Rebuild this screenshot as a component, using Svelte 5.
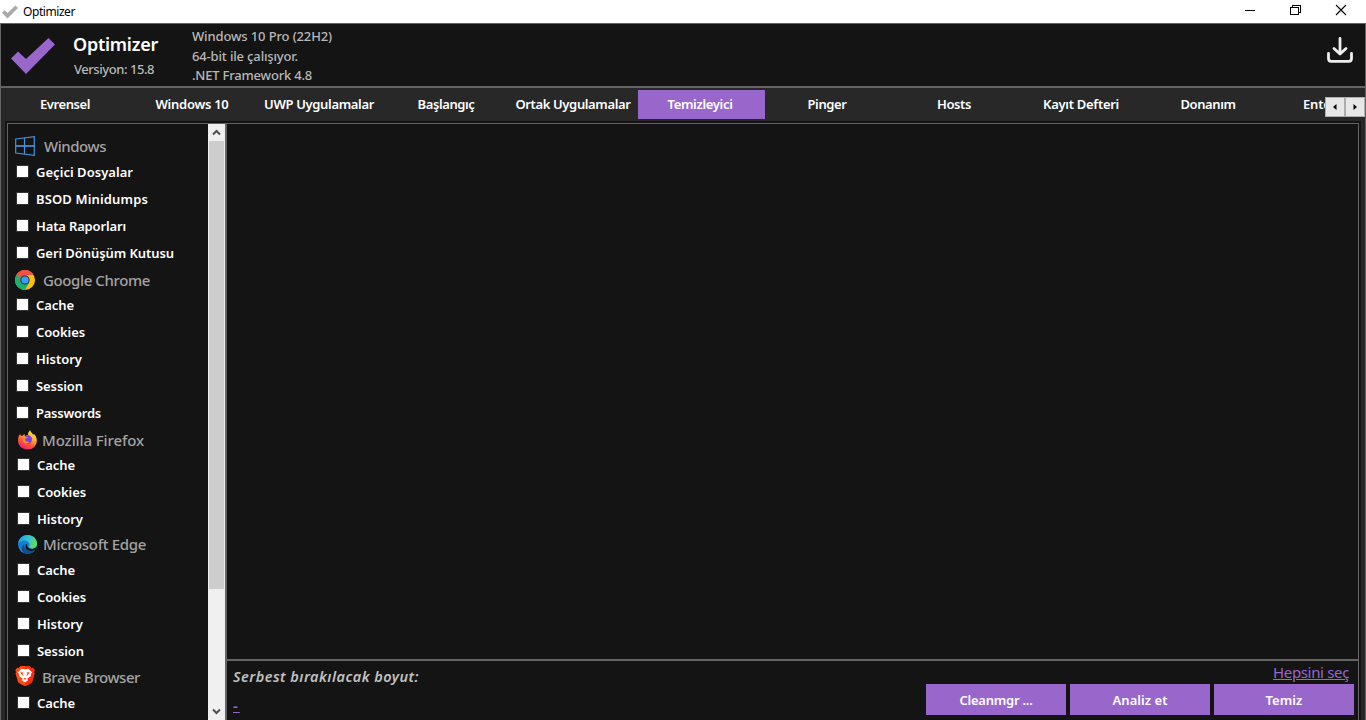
<script lang="ts">
  const tabs = [
    {name: 'Evrensel', width: 50},
    {name: 'Windows 10', width: 73},
    {name: 'UWP Uygulamalar', width: 110},
    {name: 'Başlangıç', width: 57},
    {name: 'Ortak Uygulamalar', width: 115},
    {name: 'Temizleyici', width: 65},
    {name: 'Pinger', width: 39},
    {name: 'Hosts', width: 34},
    {name: 'Kayıt Defteri', width: 76},
    {name: 'Donanım', width: 55},
    {name: 'Enterprise', width: 64},
  ];
  let selected = $state('Temizleyici');

  const cache = {name: 'Cache', width: 38};
  const cookies = {name: 'Cookies', width: 49};
  const history = {name: 'History', width: 46};
  const session = {name: 'Session', width: 47};

  const groups = [
    {
      id: 'windows', title: 'Windows', width: 62,
      items: [
        {name: 'Geçici Dosyalar', width: 97},
        {name: 'BSOD Minidumps', width: 112},
        {name: 'Hata Raporları', width: 90},
        {name: 'Geri Dönüşüm Kutusu', width: 138},
      ]
    },
    {
      id: 'chrome', title: 'Google Chrome', width: 107,
      items: [cache, cookies, history, session, {name: 'Passwords', width: 65}]
    },
    {id: 'firefox', title: 'Mozilla Firefox', width: 102, items: [cache, cookies, history]},
    {id: 'edge', title: 'Microsoft Edge', width: 103, items: [cache, cookies, history, session]},
    {id: 'brave', title: 'Brave Browser', width: 98, items: [cache]},
  ];

  const actions = [
    {name: 'Cleanmgr ...', width: 73},
    {name: 'Analiz et', width: 55},
    {name: 'Temiz', width: 37},
  ];

  // spreads the letters so that a label takes exactly the given width
  function fit(node: HTMLElement, width: number) {
    const natural = node.getBoundingClientRect().width;
    const gap = (width - natural) / node.textContent.length;
    node.style.letterSpacing = `${gap.toFixed(3)}px`;
  }
</script>

<div class="window">
  <div class="titlebar">
    <svg class="titlebar__icon" width="16" height="14" viewBox="0 0 44 36">
      <path d="M0 20 L7 13 L15 21 L37 0 L44 7 L15 36 Z" fill="#a9a9a9"/>
    </svg>
    <span class="titlebar__name"><span use:fit={52}>Optimizer</span></span>
    <svg class="titlebar__controls" width="106" height="22" viewBox="0 0 106 22" fill="none" stroke="#000" shape-rendering="crispEdges">
      <path d="M0 10.5H10"/>
      <path d="M45.5 7.5H53.5V14.5H45.5Z M47.5 7V5.5H55.5V12.5H54"/>
      <path d="M91 5L101 15M101 5L91 15" shape-rendering="auto" stroke-width="1.1"/>
    </svg>
  </div>

  <header class="header">
    <svg class="header__logo" width="44" height="36" viewBox="0 0 44 36">
      <path d="M0 20.5 L7 13.5 L15 21 L37.5 0 L44 6.5 L15 36 Z" fill="#9966cc"/>
    </svg>
    <div class="header__app">
      <h1><span use:fit={85}>Optimizer</span></h1>
      <p><span use:fit={80}>Versiyon: 15.8</span></p>
    </div>
    <div class="header__system">
      <p><span use:fit={140}>Windows 10 Pro (22H2)</span></p>
      <p><span use:fit={106}>64-bit ile çalışıyor.</span></p>
      <p><span use:fit={120}>.NET Framework 4.8</span></p>
    </div>
    <svg class="header__download" width="28" height="28" viewBox="0 0 28 28" fill="none" stroke="#eee" stroke-width="2.8" stroke-linecap="round" stroke-linejoin="round">
      <path d="M14 2.5V17M8 12.5L14 18L20 12.5"/>
      <path d="M2.5 17.5V22.5Q2.5 25.3 5.3 25.3H22.7Q25.5 25.3 25.5 22.5V17.5"/>
    </svg>
  </header>

  <nav class="tabs">
    {#each tabs as tab}
      <button class="tabs__tab" class:active={tab.name === selected} onclick={() => selected = tab.name}>
        <span use:fit={tab.width}>{tab.name}</span>
      </button>
    {/each}
    <div class="tabs__scroll">
      <span><svg width="4" height="6" viewBox="0 0 4 6"><path d="M3.5 0V6L0 3Z"/></svg></span>
      <span><svg width="4" height="6" viewBox="0 0 4 6"><path d="M.5 0V6L4 3Z"/></svg></span>
    </div>
  </nav>

  <div class="page">
    <main class="cleaner">
      <aside class="options">
        <div class="options__list">
          {#each groups as group}
            <section class="group {group.id}">
              <h2>
                {#if group.id === 'windows'}
                  <svg width="20" height="20" viewBox="0 0 20 20" fill="none" stroke="#4a90d9" stroke-width="1.2">
                    <path d="M.7 3L19.3 .7V19.3L.7 17Z"/>
                    <path d="M9.5 2V18" />
                    <path d="M.7 10H19.3" stroke-width="1.7"/>
                  </svg>
                {:else if group.id === 'chrome'}
                  <svg width="20" height="20" viewBox="0 0 20 20">
                    <circle cx="10" cy="10" r="10" fill="#ffc107"/>
                    <path d="M10 10L1.34 5A10 10 0 0 0 10 20L14.33 12.5Z" fill="#1eb070"/>
                    <path d="M1.34 5A10 10 0 0 1 18.66 5H10L5.67 12.5Z" fill="#f15246"/>
                    <path d="M1.34 5L5.67 12.5L10 10Z" fill="#1eb070"/>
                    <circle cx="10" cy="10" r="4.7" fill="#343a46"/>
                    <circle cx="10" cy="10" r="3.6" fill="#3c9cff"/>
                  </svg>
                {:else if group.id === 'firefox'}
                  <svg width="19" height="20" viewBox="0 0 19 20">
                    <defs>
                      <linearGradient id="fox" x1=".8" y1="0" x2=".25" y2="1">
                        <stop offset="0" stop-color="#fff04c"/>
                        <stop offset=".35" stop-color="#ffb22e"/>
                        <stop offset=".65" stop-color="#ff5935"/>
                        <stop offset="1" stop-color="#f5127c"/>
                      </linearGradient>
                    </defs>
                    <path d="M2.2 4L3 6L5 5.5L6.2 3.7L7 6L10 5C9.7 3 11 1.2 12.3 .3C12.5 2.3 14 3 15.3 4.7L16 4C18 6 19 8.5 18.8 11C18.4 16 14.5 19.5 9.6 19.5C4.3 19.5 0 15.5 0 10.2C0 7.8 .8 5.5 2.2 4Z" fill="url(#fox)"/>
                    <circle cx="9.7" cy="9.8" r="4.2" fill="#7542e5"/>
                    <path d="M3.3 6.5C5 5.5 7 6 8 7.3H10.2C10.2 8.3 7.7 8.4 7.2 9C6.7 10.2 7.5 11.3 9 11.4C10 11.6 11 11.6 11.2 12.2C10 14.2 6.5 14 5 11.5Z" fill="#ff8a2b"/>
                    <path d="M10 5C12.2 5.4 13.8 7 14.2 9L12.2 8.2C11.5 7.4 10.6 6.7 9 6.7Z" fill="#9a3fe0"/>
                  </svg>
                {:else if group.id === 'edge'}
                  <svg width="19" height="19" viewBox="0 0 19 19">
                    <defs>
                      <linearGradient id="wave" x1="0" y1=".2" x2="1" y2=".5">
                        <stop offset="0" stop-color="#229be0"/>
                        <stop offset=".5" stop-color="#32c2dc"/>
                        <stop offset="1" stop-color="#62df58"/>
                      </linearGradient>
                    </defs>
                    <circle cx="9.5" cy="9.5" r="9.5" fill="#1282d7"/>
                    <path d="M6.5 9C5.4 13 9 17.2 16.8 15.3C13 20.5 6.3 20 4 15.5C3 12.5 4 10.4 6.5 9Z" fill="#104e94"/>
                    <path d="M9.3 8.6C8 11.3 10.4 14.3 14.7 13.8L19 12L16.9 15.3C13 17 7.7 15.8 7.5 11.6C7.4 10.2 8.2 9 9.3 8.6Z" fill="#141414"/>
                    <path d="M.2 8.2C1 3.2 4.8 0 9.6 0C15.3 0 19 4.2 19 8.4C19 11.7 16.6 13.4 14 13.4C11.8 13.4 10.6 12.6 11 11.8C12.2 10.2 11.9 7.8 9.7 6.5C6.5 4.5 2 5.5 .2 8.2Z" fill="url(#wave)"/>
                  </svg>
                {:else}
                  <svg width="20" height="20" viewBox="0 0 20 20">
                    <path d="M5.5 0H14.5L16.3 2L18 1.8L19.7 4.2L19 6L19.5 7.4L17 16C16.6 17 10.8 20 10 20C9.2 20 3.4 17 3 16L.5 7.4L1 6L.3 4.2L2 1.8L3.7 2Z" fill="#ff4a12"/>
                    <path d="M10 0H14.5L16.3 2L18 1.8L19.7 4.2L19 6L19.5 7.4L17 16C16.6 17 10.8 20 10 20Z" fill="#fa2c0b"/>
                    <path d="M10 3.2L13.5 2.8L17 6.2L15.8 8.4L16 10L12.4 12.5L13 14.2L10 16.5L7 14.2L7.6 12.5L4 10L4.2 8.4L3 6.2L6.5 2.8Z" fill="#fff"/>
                    <path d="M5.2 6.3L8.3 6.5L7.6 7.8L8.6 10.6L6.6 8.6ZM14.8 6.3L11.7 6.5L12.4 7.8L11.4 10.6L13.4 8.6ZM8.3 12.8L10 12L11.7 12.8L10 13.7Z" fill="#fb3a0e"/>
                  </svg>
                {/if}
                <span use:fit={group.width}>{group.title}</span>
              </h2>
              {#each group.items as item}
                <label class="option">
                  <input type="checkbox"/>
                  <span use:fit={item.width}>{item.name}</span>
                </label>
              {/each}
            </section>
          {/each}
        </div>
        <div class="scrollbar">
          <svg width="17" height="17" viewBox="0 0 17 17"><path d="M5 10.5L8.5 7L12 10.5"/></svg>
          <div class="scrollbar__thumb"></div>
          <svg class="scrollbar__down" width="17" height="17" viewBox="0 0 17 17"><path d="M5 6.5L8.5 10L12 6.5"/></svg>
        </div>
      </aside>
      <div class="content">
        <div class="result"></div>
        <footer class="footer">
          <div class="footer__size">
            <p><span use:fit={186}>Serbest bırakılacak boyut:</span></p>
            <a href="#size">-</a>
          </div>
          <div class="footer__side">
            <a href="#all"><span use:fit={76}>Hepsini seç</span></a>
            <div class="footer__actions">
              {#each actions as action}
                <button><span use:fit={action.width}>{action.name}</span></button>
              {/each}
            </div>
          </div>
        </footer>
      </div>
    </main>
  </div>
</div>

<style>
  :global(body) {
    overflow: hidden;
    background: #141414;
  }

  * {
    box-sizing: border-box;
  }

  h1, h2, p {
    margin: 0;
    font-weight: 500;
  }

  h1 span, h2 span, p span {
    display: inline-block;
    white-space: nowrap;
  }

  button {
    border: none;
    padding: 0;
    color: #fff;
    font: 600 13px/20px "Noto Sans", "Open Sans", sans-serif;
    white-space: nowrap;
  }

  .window {
    display: flex;
    flex-direction: column;
    width: 1366px;
    height: 720px;
    overflow: hidden;
    font-family: "Noto Sans", "Open Sans", sans-serif;
    color: #fff;
    background: #141414;
  }

  .titlebar {
    flex: none;
    display: flex;
    align-items: center;
    height: 23px;
    padding: 0 15px 0 2px;
    background: #fff;
    color: #000;
    font-size: 12px;
  }

  .titlebar__name {
    margin-left: 5px;
    line-height: 23px;
  }

  .titlebar__controls {
    margin: -1px 0 0 auto;
  }

  .header {
    flex: none;
    display: flex;
    height: 65px;
    border: 1px solid #646464;
    border-bottom-width: 2px;
    padding-left: 10px;
    color: #b8b8b8;
    font-size: 13px;
  }

  .header__logo {
    margin-top: 14px;
  }

  .header__app {
    width: 119px;
    margin-left: 18px;
  }

  .header__app h1 {
    height: 35px;
    padding-top: 7px;
    color: #fff;
    font-size: 18px;
    font-weight: 600;
    line-height: 27px;
  }

  .header__app p {
    padding-left: 1px;
    line-height: 20px;
  }

  .header__system {
    padding-top: 3px;
    line-height: 19.5px;
  }

  .header__system p {
    height: 19.5px;
  }

  .header__download {
    margin: 12px 11px 0 auto;
  }

  .tabs {
    flex: none;
    position: relative;
    display: flex;
    height: 33px;
    padding: 2px 0 0 2px;
    overflow: hidden;
    border: solid #646464;
    border-width: 0 1px;
    background: #282828;
  }

  .tabs__tab {
    flex: none;
    width: 127px;
    height: 29px;
    padding: 0 3px 2px 0;
    background: transparent;
  }

  .tabs__tab.active {
    background: #9966cc;
  }

  .tabs__scroll {
    position: absolute;
    top: 9px;
    right: 0;
    display: flex;
    width: 40px;
    height: 20px;
    background: #f0f0f0;
  }

  .tabs__scroll span {
    flex: 1;
    display: flex;
    align-items: center;
    justify-content: center;
    border: 1px solid #adadad;
    background: #e7e7e7;
  }

  .page {
    flex: 1;
    display: flex;
    min-height: 0;
    padding: 0 4px;
    border: solid #646464;
    border-width: 0 1px;
    background: #282828;
  }

  .cleaner {
    flex: 1;
    display: flex;
    border: 2px solid #141414;
    border-bottom: none;
    background: #141414;
  }

  .options {
    flex: none;
    display: flex;
    width: 220px;
    border: solid #646464;
    border-width: 1px 2px 0 1px;
  }

  .options__list {
    flex: 1;
    padding-top: 9px;
    overflow: hidden;
  }

  .group h2 {
    display: flex;
    align-items: center;
    height: 25px;
    padding-left: 7px;
    color: #a3a3a3;
    font-size: 15px;
    line-height: 25px;
  }

  .group h2 svg {
    flex: none;
    margin: 2px 8px 0 0;
  }

  .group h2 span {
    padding-top: 3px;
  }

  .group.windows h2 svg {
    margin: 0 9px 0 0;
  }

  .group.windows h2 span,
  .group.brave h2 span {
    padding-top: 2px;
  }

  .group.firefox h2,
  .group.edge h2 {
    padding-left: 10px;
  }

  .group.firefox h2 svg {
    margin-right: 5px;
  }

  .group.edge h2 {
    height: 24px;
  }

  .group.edge h2 span {
    padding-top: 0;
  }

  .group.edge h2 svg {
    margin: 0 6px 0 0;
  }

  .group.brave h2 svg {
    margin: -2px 7px 0 0;
  }

  .option {
    display: flex;
    align-items: center;
    height: 27px;
    padding-left: 8px;
    font-size: 13px;
    font-weight: 600;
    line-height: 25px;
    white-space: nowrap;
  }

  .option span {
    padding-top: 2px;
  }

  .firefox .option,
  .edge .option,
  .brave .option {
    padding-left: 9px;
  }

  .option input {
    appearance: none;
    width: 13px;
    height: 13px;
    margin: 0 7px 0 0;
    border: 1px solid #333;
    background: #fff;
  }

  .scrollbar {
    flex: none;
    display: flex;
    flex-direction: column;
    width: 17px;
    background: #f0f0f0;
  }

  .scrollbar svg {
    flex: none;
    fill: none;
    stroke: #505050;
    stroke-width: 2;
  }

  .scrollbar__thumb {
    height: 448px;
    margin: 0 1px;
    background: #cdcdcd;
  }

  .scrollbar__down {
    margin-top: auto;
  }

  .content {
    flex: 1;
    display: flex;
    flex-direction: column;
    border: solid #646464;
    border-width: 1px 1px 0 0;
  }

  .result {
    flex: 1;
  }

  .footer {
    display: flex;
    justify-content: space-between;
    height: 61px;
    border-top: 2px solid #646464;
    padding: 0 4px 0 6px;
  }

  .footer a {
    color: #9966cc;
  }

  .footer__size {
    padding-top: 4px;
  }

  .footer__size p {
    height: 25px;
    color: #c0c0c0;
    font-size: 14.5px;
    font-style: italic;
    font-weight: 600;
    line-height: 23px;
  }

  .footer__size a {
    display: block;
    font-size: 15px;
    font-weight: 600;
    letter-spacing: 2px;
    line-height: 30px;
  }

  .footer__side {
    display: flex;
    flex-direction: column;
    align-items: flex-end;
  }

  .footer__side a {
    height: 23px;
    margin-right: 5px;
    font-size: 15px;
    line-height: 23px;
    white-space: nowrap;
  }

  .footer__actions {
    display: flex;
    gap: 4px;
  }

  .footer__actions button {
    width: 140px;
    height: 31px;
    background: #9966cc;
  }
</style>
